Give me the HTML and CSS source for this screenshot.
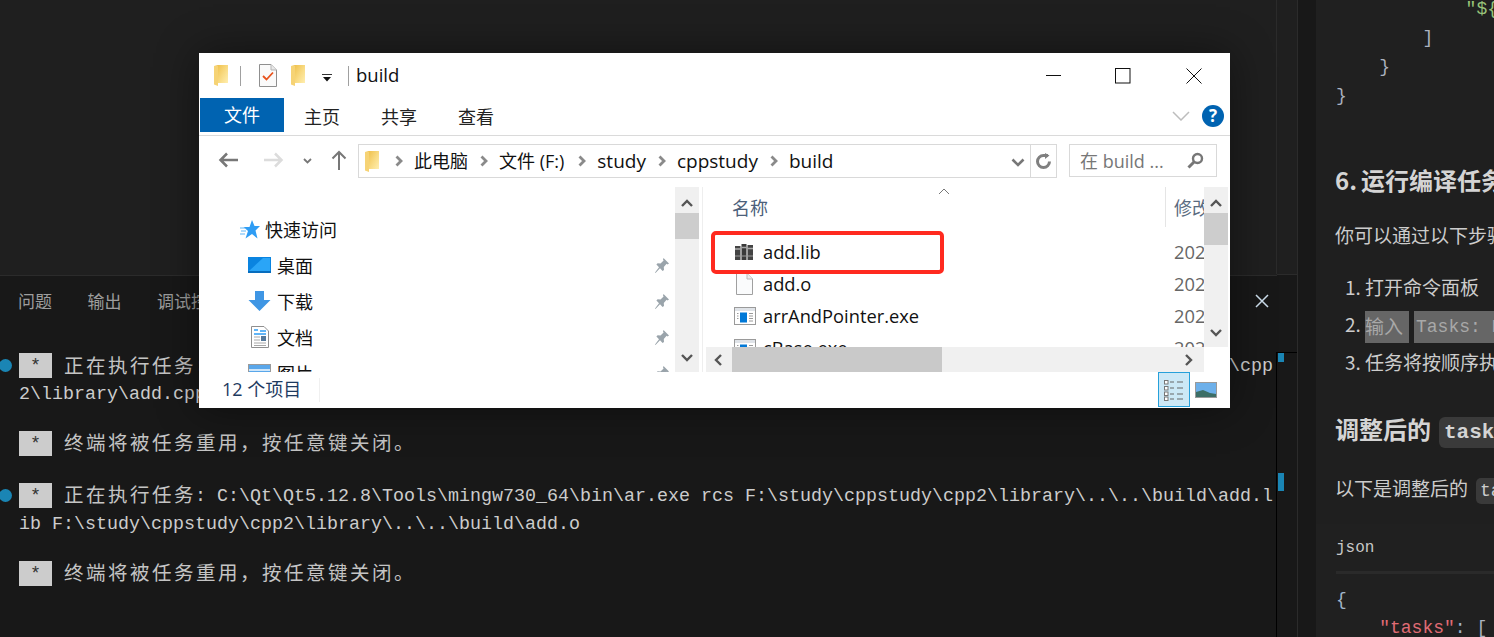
FILE: index.html
```html
<!DOCTYPE html>
<html lang="zh">
<head>
<meta charset="utf-8">
<title>build</title>
<link rel="stylesheet" href="styles.css">
</head>
<body>
<svg class="defs" width="0" height="0" aria-hidden="true">
  <defs>
    <linearGradient id="fg" x1="0" y1="0" x2="1" y2="1"><stop offset="0" stop-color="#f0c24f"/><stop offset=".55" stop-color="#f9dc86"/><stop offset="1" stop-color="#ffeeb0"/></linearGradient>
    <symbol id="folder" viewBox="0 0 15 21">
      <path d="M0 1 L4 0 H14 V18 H4 V2 Z" fill="#efc24e"/>
      <path d="M4 0 H14 V18 H4 Z" fill="url(#fg)"/>
      <path d="M0 1 L4 1 V21 L0 19.500 Z" fill="#f6d375"/>
    </symbol>
    <symbol id="pin" viewBox="0 0 16 17">
      <path d="M9.500 1 L15 6.500 L13.600 7.400 L12.600 6.800 L9.800 10 L10 13 L8.600 14 L6 11.200 L1.500 16 L1 15.500 L5 10.200 L2.400 7.600 L3.600 6.300 L6.500 6.600 L9.600 3.600 L9 2.400 Z" fill="#9aa4ab"/>
    </symbol>
    <symbol id="up" viewBox="0 0 14 10"><path d="M2 8 L7 3 L12 8" fill="none" stroke="#555" stroke-width="2.400"/></symbol>
    <symbol id="down" viewBox="0 0 14 10"><path d="M2 2 L7 7 L12 2" fill="none" stroke="#555" stroke-width="2.400"/></symbol>
    <symbol id="chev" viewBox="0 0 8 12"><path d="M1.500 1.500 L6 6 L1.500 10.500" fill="none" stroke="#8a8a8a" stroke-width="2.800"/></symbol>
    <symbol id="exe" viewBox="0 0 22 18">
      <rect x=".5" y=".5" width="21" height="17" fill="#fff" stroke="#9a9a9a"/>
      <rect x="1" y="1" width="20" height="3" fill="#dfe3e8"/>
      <rect x="6" y="5.500" width="7" height="10" fill="#0078d7"/>
      <path d="M15 6.500h4M15 9h4M15 11.500h4M15 14h4M3 6.500h1.500M3 9h1.500M3 11.500h1.500" stroke="#9a9a9a"/>
    </symbol>
  </defs>
</svg>

<div class="app">
  <div class="workbench">
    <div class="editor"></div>
    <div class="terminal">
      <div class="term-tabs">
        <span class="term-tab">问题</span>
        <span class="term-tab">输出</span>
        <span class="term-tab">调试控制台</span>
        <svg class="term-close" width="14" height="14" viewBox="0 0 14 14"><path d="M1 1 L13 13 M13 1 L1 13" stroke="#cfe0ee" stroke-width="1.500"/></svg>
      </div>
      <div class="term-body">
        <div class="term-group">
          <div class="term-line"><i class="dot"></i><b class="star">*</b><span class="cjk">正在执行任务</span><span class="m">: C:\Qt\Qt5.12.8\Tools\mingw730_64\bin\g++.exe -g -c -o F:\study\build\add.o F:\study\cppstudy\cpp</span></div>
          <div class="term-line cont">2\library\add.cpp</div>
        </div>
        <div class="term-group g2">
          <div class="term-line"><b class="star">*</b><span class="cjk">终端将被任务重用，按任意键关闭。</span></div>
        </div>
        <div class="term-group g3">
          <div class="term-line"><i class="dot"></i><b class="star">*</b><span class="cjk">正在执行任务</span><span class="m">: C:\Qt\Qt5.12.8\Tools\mingw730_64\bin\ar.exe rcs F:\study\cppstudy\cpp2\library\..\..\build\add.l</span></div>
          <div class="term-line cont">ib F:\study\cppstudy\cpp2\library\..\..\build\add.o</div>
        </div>
        <div class="term-group g4">
          <div class="term-line"><b class="star">*</b><span class="cjk">终端将被任务重用，按任意键关闭。</span></div>
        </div>
      </div>
    </div>
  </div>

  <div class="rail">
    <div class="rail-top"></div>
    <div class="rail-term">
      <div class="rail-head"></div>
      <div class="rail-marks"><i class="mark m1"></i><i class="mark m2"></i></div>
    </div>
  </div>
  <div class="gutter"></div>

  <div class="chat">
    <div class="code-block first">
      <pre class="code"><span class="s">            "${workspaceFolder}"</span>
<span class="p">        ]</span>
<span class="p">    }</span>
<span class="p">}</span></pre>
    </div>
    <h2 class="h h-a"><span class="hn">6.</span>运行编译任务</h2>
    <p class="para p-a">你可以通过以下步骤运行编译任务：</p>
    <ol class="steps">
      <li>打开命令面板</li>
      <li><span class="sel">输入</span><code class="sel2">Tasks: Run Task</code></li>
      <li>任务将按顺序执行</li>
    </ol>
    <h2 class="h h-b">调整后的<code class="big">tasks.json</code></h2>
    <p class="para p-b">以下是调整后的<code class="inline">tasks.json</code></p>
    <div class="code-block second">
      <div class="lang">json</div>
      <pre class="code"><span class="b">{</span>
<span class="r">    "tasks"</span><span class="b">:</span> <span class="p">[</span></pre>
    </div>
  </div>
</div>

<div class="win">
  <div class="titlebar">
    <svg class="ic-f1" width="15" height="21"><use href="#folder"/></svg>
    <i class="tsep"></i>
    <svg class="ic-doc" width="18" height="23" viewBox="0 0 18 23">
      <path d="M.5 .5 H12 L17.500 6 V22.500 H.5 Z" fill="#fafafa" stroke="#8f8f8f"/>
      <path d="M12 .5 V6 H17.500" fill="#e8e8e8" stroke="#b5b5b5"/>
      <path d="M4 12 L7.500 15.500 L14 8.500" fill="none" stroke="#e8521c" stroke-width="1.800"/>
    </svg>
    <svg class="ic-f2" width="15" height="21"><use href="#folder"/></svg>
    <svg class="ic-caret" width="10" height="10" viewBox="0 0 10 10"><path d="M0 1.500H10" stroke="#333"/><path d="M1 4H9L5 8.500Z" fill="#111"/></svg>
    <i class="tsep last"></i>
    <span class="wintitle">build</span>
    <div class="winctl">
      <svg width="15" height="16" viewBox="0 0 15 16"><path d="M0 7.500H15" stroke="#111"/></svg>
      <svg width="16" height="16" viewBox="0 0 16 16"><rect x=".5" y=".5" width="14.500" height="14.500" fill="none" stroke="#111"/></svg>
      <svg class="ctl-x" width="16" height="16" viewBox="0 0 16 16"><path d="M.5 .5L15.500 15.500M15.500 .5L.5 15.500" stroke="#111"/></svg>
    </div>
  </div>

  <div class="ribbon">
    <span class="rtab active">文件</span>
    <span class="rtab t1">主页</span>
    <span class="rtab t2">共享</span>
    <span class="rtab t3">查看</span>
    <svg class="rib-chev" width="18" height="10" viewBox="0 0 18 10"><path d="M1 1L9 9L17 1" fill="none" stroke="#bdbdbd" stroke-width="1.500"/></svg>
    <span class="help">?</span>
  </div>

  <div class="addrrow">
    <svg class="nav-back" width="20" height="16" viewBox="0 0 20 16"><path d="M9 1.500L2.500 8L9 14.500M3 8H20" fill="none" stroke="#777" stroke-width="2.500"/></svg>
    <svg class="nav-fwd" width="20" height="16" viewBox="0 0 20 16"><path d="M11 1.500L17.500 8L11 14.500M17 8H0" fill="none" stroke="#dcdcdc" stroke-width="2.500"/></svg>
    <svg class="nav-hist" width="9" height="6" viewBox="0 0 9 6"><path d="M1 1L4.500 4.500L8 1" fill="none" stroke="#777" stroke-width="1.800"/></svg>
    <svg class="nav-up" width="16" height="20" viewBox="0 0 16 20"><path d="M1.500 8.500L8 2L14.500 8.500M8 2V20" fill="none" stroke="#777" stroke-width="2"/></svg>
    <div class="addr">
      <svg class="addr-f" width="15" height="21"><use href="#folder"/></svg>
      <svg class="crumb-c first-c" width="8" height="12"><use href="#chev"/></svg><span class="crumb">此电脑</span>
      <svg class="crumb-c" width="8" height="12"><use href="#chev"/></svg><span class="crumb wide">文件 (F:)</span>
      <svg class="crumb-c" width="8" height="12"><use href="#chev"/></svg><span class="crumb lat">study</span>
      <svg class="crumb-c" width="8" height="12"><use href="#chev"/></svg><span class="crumb lat">cppstudy</span>
      <svg class="crumb-c" width="8" height="12"><use href="#chev"/></svg><span class="crumb lat">build</span>
      <svg class="addr-dd" width="14" height="9" viewBox="0 0 14 9"><path d="M1.500 1.500L7 7L12.500 1.500" fill="none" stroke="#777" stroke-width="2.600"/></svg>
      <div class="addr-ref">
        <svg width="17" height="17" viewBox="0 0 17 17"><path d="M14.500 8.500A6 6 0 1 1 8.500 2.500H13" fill="none" stroke="#808080" stroke-width="3"/><path d="M10 0V6L14.500 2.500Z" fill="#808080"/></svg>
      </div>
    </div>
    <div class="search">
      <span class="search-t">在 build ...</span>
      <svg width="17" height="17" viewBox="0 0 17 17"><circle cx="10.500" cy="6.500" r="4.500" fill="none" stroke="#777" stroke-width="2.400"/><path d="M7 10L1.500 15.500" stroke="#777" stroke-width="3"/></svg>
    </div>
  </div>

  <div class="content">
    <div class="navpane">
      <div class="navrow quick">
        <svg width="20" height="19" viewBox="0 0 20 19"><path d="M12 0L14.500 6H20L15.500 10.500L17.500 18.500L12 14L5.500 18.500L8 11L3.500 7H9.500Z" fill="#2f9df4"/><path d="M0 8H5M1 11H6M0 14H5" stroke="#5fb5f6"/></svg>
        <span>快速访问</span>
      </div>
      <div class="navrow">
        <svg width="23" height="16" viewBox="0 0 23 16"><rect width="23" height="16" fill="#0a84e0"/><path d="M1 14L15 1H22V14Z" fill="#2aa5f7"/><path d="M0 15H23" stroke="#05579b"/></svg>
        <span>桌面</span><svg class="pin" width="16" height="17"><use href="#pin"/></svg>
      </div>
      <div class="navrow">
        <svg width="23" height="20" viewBox="0 0 23 20"><path d="M7 0H16V9H22.500L11.500 20L.5 9H7Z" fill="#3f96e4"/></svg>
        <span>下载</span><svg class="pin" width="16" height="17"><use href="#pin"/></svg>
      </div>
      <div class="navrow">
        <svg width="23" height="22" viewBox="0 0 23 22"><path d="M3.500 .5H16L20.500 5V21.500H3.500Z" fill="#fff" stroke="#8f8f8f"/><path d="M6 4H10M12 5H18M6 8H18" stroke="#2f9df4" stroke-width="1.300"/><path d="M6 11H12M6 14H12M6 17H18M6 19.500H18" stroke="#a8a8a8"/><rect x="13" y="10" width="5" height="5" fill="#55799b"/></svg>
        <span>文档</span><svg class="pin" width="16" height="17"><use href="#pin"/></svg>
      </div>
      <div class="navrow">
        <svg width="23" height="18" viewBox="0 0 23 18"><rect x=".5" y=".5" width="22" height="17" fill="#5aa7ea" stroke="#9a9a9a"/><path d="M1 6H22" stroke="#cfe6fa" stroke-width="2"/></svg>
        <span>图片</span><svg class="pin" width="16" height="17"><use href="#pin"/></svg>
      </div>
    </div>
    <div class="vscroll nav-scroll">
      <svg class="sc-a" width="14" height="10"><use href="#up"/></svg>
      <i class="thumb t-nav"></i>
      <svg class="sc-b" width="14" height="10"><use href="#down"/></svg>
    </div>
    <div class="divider"></div>
    <div class="mainpane">
      <div class="main-top">
        <div class="list">
          <div class="sortup"><svg width="12" height="7" viewBox="0 0 12 7"><path d="M1 6L6 1L11 6" fill="none" stroke="#777"/></svg></div>
          <div class="colhead">
            <span class="col-name">名称</span>
            <span class="col-date">修改</span>
          </div>
          <div class="frow">
            <svg class="ficon" width="20" height="16" viewBox="0 0 20 16"><rect x="1" y="2" width="5.500" height="14" fill="#444"/><rect x="7.500" y="0" width="5" height="16" fill="#3a3a3a"/><rect x="13.500" y="1" width="5.500" height="15" fill="#444"/><path d="M1 5H6.500M7.500 3.500H12.500M13.500 4.500H19" stroke="#aaa" stroke-width="1.500"/><path d="M1 12H6.500M7.500 12H12.500M13.500 12H19" stroke="#999"/></svg>
            <span class="fname">add.lib</span><span class="fdate">202</span>
          </div>
          <div class="frow">
            <svg class="ficon" width="20" height="22" viewBox="0 0 20 22"><path d="M2.500 .5H13L18.500 6V21.500H2.500Z" fill="#fafbfc" stroke="#a0a0a0"/><path d="M13 .5V6H18.500" fill="#eee" stroke="#bbb"/></svg>
            <span class="fname">add.o</span><span class="fdate">202</span>
          </div>
          <div class="frow">
            <svg class="ficon" width="22" height="18"><use href="#exe"/></svg>
            <span class="fname">arrAndPointer.exe</span><span class="fdate">202</span>
          </div>
          <div class="frow">
            <svg class="ficon" width="22" height="18"><use href="#exe"/></svg>
            <span class="fname">cBase.exe</span><span class="fdate">202</span>
          </div>
          <div class="redbox"></div>
        </div>
        <div class="vscroll list-scroll">
          <svg class="sc-a" width="14" height="10"><use href="#up"/></svg>
          <i class="thumb t-list"></i>
          <svg class="sc-b" width="14" height="10"><use href="#down"/></svg>
        </div>
      </div>
      <div class="hscroll">
        <svg width="10" height="14" viewBox="0 0 10 14"><path d="M8 2L3 7L8 12" fill="none" stroke="#555" stroke-width="2.400"/></svg>
        <i class="hthumb"></i>
        <svg width="10" height="14" viewBox="0 0 10 14"><path d="M2 2L7 7L2 12" fill="none" stroke="#555" stroke-width="2.400"/></svg>
      </div>
    </div>
  </div>

  <div class="status">
    <span class="count">12 个项目</span>
    <i class="st-sep"></i>
    <div class="views">
      <div class="view on">
        <svg width="22" height="22" viewBox="0 0 22 22"><path d="M7 3H11M14 3H20M7 9H11M14 9H20M7 15H11M14 15H20M7 20H11M14 20H20" stroke="#666"/><g fill="#fff" stroke="#777"><rect x="1.500" y="1.500" width="3.500" height="3.500"/><rect x="1.500" y="7.500" width="3.500" height="3.500"/><rect x="1.500" y="13" width="3.500" height="3.500"/><rect x="1.500" y="18" width="3.500" height="3.500"/></g></svg>
      </div>
      <div class="view">
        <svg width="22" height="16" viewBox="0 0 22 16"><rect x=".5" y=".5" width="21" height="15" fill="#6db0ea" stroke="#9a9a9a"/><path d="M1 10L8 8L15 11L21 12V15H1Z" fill="#3c6e66"/></svg>
      </div>
    </div>
  </div>
</div>
</body>
</html>
```

FILE: styles.css
```css
* { box-sizing: border-box; }
html, body { margin: 0; padding: 0; height: 100%; overflow: hidden; background: #1f1f1f; }
.defs { position: absolute; }
.app { display: flex; width: 1494px; height: 637px; overflow: hidden; }

/* left workbench */
.workbench { width: 1277px; display: flex; flex-direction: column; flex: none; overflow: hidden; }
.editor { height: 275px; background: #1f1f1f; flex: none; }
.terminal { flex: 1; background: #181818; border-top: 1px solid #2b2b2b; overflow: hidden; }
.term-tabs { height: 50px; display: flex; align-items: center; padding: 0 8px 0 18px; gap: 35.500px; position: relative; }
.term-tab { font: 17px/20px "Noto Sans CJK SC", sans-serif; color: #9d9d9d; white-space: nowrap; }
.term-close { position: absolute; left: 1255px; top: 18px; }
.term-body { padding: 26px 0 0 19px; font: 18.33px/27px "Liberation Mono", "Noto Sans CJK SC", monospace; color: #cccccc; white-space: nowrap; }
.term-group { position: relative; }
.g2 { margin-top: 23.500px; }
.g3 { margin-top: 25px; }
.g4 { margin-top: 24px; }
.term-line { height: 27px; display: flex; white-space: pre; align-items: center; position: relative; }
.term-line.cont { padding-top: 4px; }
.m { padding-top: 2px; }
.cjk { font: 19.500px/26px "Noto Sans CJK SC", sans-serif; letter-spacing: 2.500px; margin: 0 -1px 0 12px; padding-bottom: 2px; color: #c4c4c4; }
.star { width: 33px; height: 25px; background: #cccccc; color: #333; font: 400 18.33px/28px "Liberation Mono", monospace; text-align: center; flex: none; }
.dot { position: absolute; left: -20px; top: 7px; width: 13px; height: 13px; border-radius: 50%; background: #1a85b4; }

/* rail + gutter */
.rail { width: 21px; flex: none; display: flex; flex-direction: column; border-right: 1px solid #2b2b2b; }
.rail-top { height: 275px; background: #1f1f1f; border-left: 1px solid #2b2b2b; margin-left: -1px; }
.rail-term { flex: 1; background: #181818; border-top: 1px solid #2b2b2b; }
.rail-head { height: 77px; }
.rail-marks { height: 285px; border-top: 1px solid #000; border-left: 1px solid #000; margin-left: -1px; position: relative; }
.mark { position: absolute; left: 1px; width: 6px; background: #1a85b4; }
.m1 { top: 0; height: 9px; }
.m2 { top: 120px; height: 18px; }
.gutter { width: 18px; background: #181818; flex: none; }

/* chat panel */
.chat { flex: 1; background: #1f1f1f; font-family: "Noto Sans CJK SC", sans-serif; color: #cfcfcf; overflow: hidden; white-space: nowrap; }
.code-block { background: #202020; padding-left: 20px; }
.first { margin-top: -5px; height: 135px; }
.code { margin: 0; font: 18px/29px "Liberation Mono", monospace; color: #abb2bf; }
.s { color: #98c379; }
.p { color: #abb2bf; }
.b { color: #a0b4c8; }
.r { color: #e06c75; }
.h { margin: 0; padding-left: 19px; font: 700 24px/36px "Noto Sans CJK SC", sans-serif; color: #d4d4d4; }
.h-a { margin-top: 32px; }
.hn { display: inline-block; width: 26px; }
.h-b { margin-top: 31px; }
.para { margin: 0; padding-left: 19px; font-size: 19px; line-height: 30px; color: #cccccc; }
.p-a { margin-top: 22px; }
.p-b { margin-top: 25px; }
.steps { margin: 18px 0 0; padding: 0 0 0 49px; font-size: 19px; line-height: 37px; color: #cccccc; }
.sel { display: inline-block; height: 32px; line-height: 30px; vertical-align: middle; padding-right: 6px; background: #666; color: #a8a8a8; }
.sel2 { display: inline-block; height: 32px; vertical-align: middle; margin-left: 5px; padding: 0 2px; background: #666; color: #a8a8a8; font: 18px/32px "Liberation Mono", monospace; }
.inline { display: inline-block; height: 26px; vertical-align: middle; margin-left: 8px; padding: 0 4px; font: 18px/26px "Liberation Mono", monospace; background: #3a3a3a; border-radius: 5px; color: #cccccc; }
.big { display: inline-block; height: 31px; vertical-align: middle; margin-left: 8px; padding: 0 5px; font: 700 21px/31px "Liberation Mono", monospace; background: #3a3a3a; border-radius: 6px; color: #d4d4d4; }
.second { margin-top: 20px; padding-top: 0; }
.lang { height: 47px; font: 16px/49px "Liberation Mono", monospace; color: #c8c8c8; border-bottom: 3px solid #2a2a2a; box-sizing: content-box; margin-bottom: 12px; }
.second .code { line-height: 28px; }

/* explorer window */
.win { position: absolute; left: 199px; top: 53px; width: 1031px; height: 355px; background: #fff; display: flex; flex-direction: column; box-shadow: 0 0 40px rgba(0,0,0,.45); font-family: "Open Sans", "Noto Sans CJK SC", sans-serif; color: #111; overflow: hidden; }
.titlebar { height: 45px; display: flex; align-items: center; flex: none; position: relative; padding-left: 15px; }
.tsep { width: 1px; height: 20px; background: #a0a0a0; margin-left: 11px; }
.tsep.last { margin-left: 16px; }
.ic-doc { margin-left: 18px; }
.ic-f2 { margin-left: 14px; }
.ic-caret { margin-left: 16px; margin-top: 4px; }
.wintitle { font-size: 18.500px; margin-left: 7px; line-height: 24px; margin-top: -2px; }
.winctl { margin-left: auto; display: flex; gap: 54px; padding-right: 28px; }
.ctl-x { margin-left: 1px; }
.ribbon { height: 38px; display: flex; align-items: flex-start; flex: none; border-bottom: 1px solid #dadada; position: relative; }
.rtab { font: 18px/34px "Noto Sans CJK SC", sans-serif; color: #222; height: 34px; padding-top: 1px; }
.rtab.active { width: 84px; margin-left: 1px; background: #0063b1; color: #fff; text-align: center; padding-top: 0; line-height: 33px; }
.t1 { margin-left: 20px; }
.t2 { margin-left: 41px; }
.t3 { margin-left: 41px; }
.rib-chev { margin-left: auto; margin-top: 13px; }
.help { width: 22px; height: 22px; border-radius: 50%; background: #0063b1; color: #fff; font: 700 17px/22px "Open Sans", sans-serif; text-align: center; margin: 7px 6px 0 12px; }
.addrrow { height: 51px; display: flex; align-items: flex-start; flex: none; padding-top: 8px; }
.nav-back { margin: 8px 0 0 19px; }
.nav-fwd { margin: 8px 0 0 26px; }
.nav-hist { margin: 14px 0 0 19px; }
.nav-up { margin: 6px 0 0 19px; }
.addr { width: 699px; height: 34px; margin-left: 11px; border: 1px solid #d9d9d9; display: flex; align-items: center; padding-left: 6px; }
.addr-f { flex: none; }
.crumb-c { margin-left: 12px; flex: none; }
.first-c { margin-left: 15px; }
.crumb { font: 18px/24px "Open Sans", "Noto Sans CJK SC", sans-serif; margin-left: 11px; white-space: nowrap; margin-top: -1px; }
.crumb.wide { padding-right: 2px; }
.crumb.lat { font-size: 19px; }
.addr-dd { margin-left: auto; margin-right: 5px; margin-top: 3px; }
.addr-ref { width: 26px; height: 32px; border-left: 1px solid #d9d9d9; display: flex; align-items: center; justify-content: center; }
.search { width: 148px; height: 33px; margin-left: 12px; border: 1px solid #d9d9d9; display: flex; align-items: center; justify-content: space-between; padding: 0 12px 0 10px; }
.search-t { font: 18px/24px "Open Sans", "Noto Sans CJK SC", sans-serif; color: #777; white-space: nowrap; }
.content { height: 185px; flex: none; display: flex; overflow: hidden; }
.navpane { width: 476px; flex: none; overflow: hidden; padding-top: 24px; }
.navrow { height: 36px; display: flex; align-items: center; padding-left: 49px; font: 18px/24px "Noto Sans CJK SC", sans-serif; }
.navrow span { margin-left: 6px; }
.navrow.quick { padding-left: 41px; }
.navrow.quick span { margin-left: 5px; }
.pin { margin-left: auto; margin-right: 5px; }
.vscroll { width: 24px; flex: none; background: #f0f0f0; position: relative; display: flex; flex-direction: column; align-items: center; }
.sc-a { margin-top: 11px; flex: none; }
.sc-b { margin-top: auto; margin-bottom: 9px; flex: none; }
.thumb { background: #cdcdcd; width: 100%; flex: none; margin-top: 5px; }
.t-nav { height: 26px; }
.t-list { height: 32px; }
.divider { width: 7px; flex: none; background: linear-gradient(90deg, #fff 3px, #eee 3px, #eee 4px, #fff 4px); }
.mainpane { width: 522px; flex: none; display: flex; flex-direction: column; }
.main-top { height: 160px; display: flex; flex: none; }
.list { width: 498px; flex: none; overflow: hidden; position: relative; padding-top: 0; }
.sortup { position: absolute; left: 232px; top: 1px; line-height: 0; }
.colhead { height: 49px; display: flex; font: 18px/24px "Noto Sans CJK SC", sans-serif; color: #4c607a; padding: 8px 0 0 26px; position: relative; }
.col-date { position: absolute; left: 459px; top: 0; height: 40px; border-left: 1px solid #e5e5e5; padding: 8px 0 0 8px; width: 60px; overflow: hidden; white-space: nowrap; color: #5a6b80; }
.frow { height: 32px; display: flex; align-items: center; font: 18.300px/24px "Open Sans", sans-serif; position: relative; margin-top: 0; }
.ficon { position: absolute; left: 28px; top: 50%; transform: translateY(-50%); }
.fname { margin-left: 57px; white-space: nowrap; }
.fdate { position: absolute; left: 468px; color: #666; }
.redbox { position: absolute; left: 5px; top: 44px; width: 233px; height: 43px; border: 4px solid #ff2a1f; border-radius: 5px; }
.list-scroll { width: 24px; }
.hscroll { width: 498px; height: 25px; background: #f0f0f0; display: flex; align-items: center; padding: 0 10px 0 7px; flex: none; }
.hthumb { width: 210px; height: 25px; background: #c9c9c9; margin-left: 9px; }
.hscroll svg:last-child { margin-left: auto; }
.status { flex: 1; display: flex; align-items: center; padding-left: 23px; position: relative; }
.count { font: 18px/24px "Open Sans", "Noto Sans CJK SC", sans-serif; color: #1e3a5f; margin-top: -2px; }
.st-sep { width: 1px; height: 24px; background: #f0f0f0; margin-left: 18px; }
.views { margin-left: auto; margin-right: 13px; display: flex; align-items: center; gap: 4px; align-self: flex-start; }
.view { width: 23px; height: 35px; display: flex; align-items: center; justify-content: center; }
.view.on { width: 32px; background: #cce8f6; border: 1px solid #26a0da; }
```
